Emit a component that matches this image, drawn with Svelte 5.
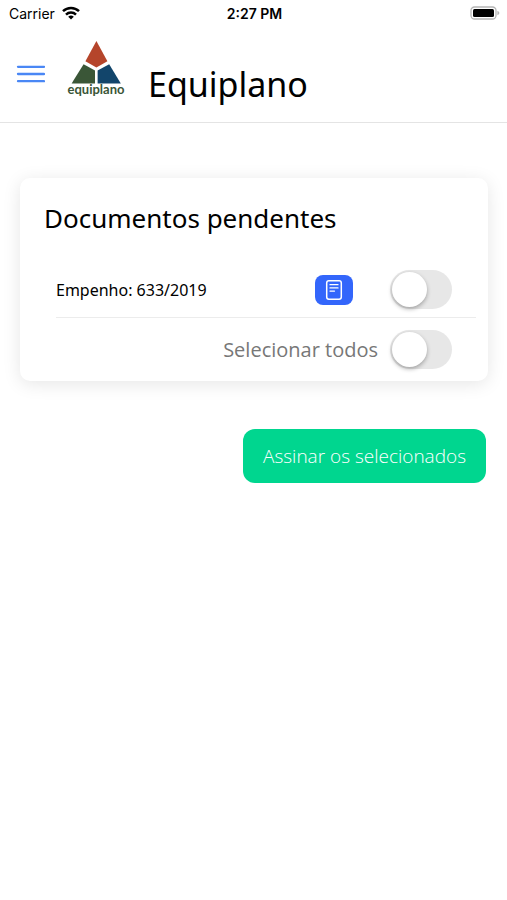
<script lang="ts">
	let documents = $state([{ id: 1, label: 'Empenho: 633/2019', selected: false }]);

	let allSelected = $derived(documents.every((doc) => doc.selected));

	function toggleAll() {
		const next = !allSelected;
		for (const doc of documents) doc.selected = next;
	}
</script>

<div class="status-bar">
	<div class="carrier">
		<span>Carrier</span>
		<svg width="18" height="14" viewBox="0 0 18 14" aria-hidden="true">
			<g fill="none" stroke="#000" stroke-width="2.5">
				<path d="M1 5.2a11.6 11.6 0 0 1 16 0" />
				<path d="M4 8.6a7.2 7.2 0 0 1 10 0" />
			</g>
			<path d="M9 13.6 6.2 10.8a4 4 0 0 1 5.6 0z" />
		</svg>
	</div>
	<span class="time">2:27 PM</span>
	<div class="battery">
		<svg width="30" height="14" viewBox="0 0 30 14" aria-hidden="true">
			<rect x="1" y="1" width="25" height="12" rx="3.5" fill="#fff" stroke="#b5b5b5" stroke-width="1.3" />
			<rect x="3" y="3" width="21" height="8" rx="1.5" />
			<path d="M27.4 4.7q2 .7 2 2.3t-2 2.3z" fill="#b5b5b5" />
		</svg>
	</div>
</div>

<header>
	<button class="menu" aria-label="Menu">
		<svg width="29" height="18" viewBox="0 0 29 18" aria-hidden="true">
			<path d="M2 1.8h26M2 9h26M2 16.2h26" stroke="#4a87f5" stroke-width="2.3" stroke-linecap="round" />
		</svg>
	</button>
	<svg class="logo" width="60" height="60" viewBox="0 0 60 60" role="img" aria-label="equiplano">
		<path d="M30.4 1 41.4 21.2 30.4 27.6 19.4 21.2z" fill="#b5452b" />
		<path d="M17.6 24.2 29 30.6V43.6H5.6z" fill="#3a5637" />
		<path d="M43.2 24.2 31.6 30.6V43.6H54.8z" fill="#12456b" />
		<text x="30" y="54" text-anchor="middle">equiplano</text>
	</svg>
	<h1>Equiplano</h1>
</header>

<main>
	<section class="card">
		<h2>Documentos pendentes</h2>
		<ul>
			{#each documents as doc (doc.id)}
				<li class="row">
					<label class="doc-label" for="doc-{doc.id}">{doc.label}</label>
					<button class="view" aria-label="Ver documento">
						<svg width="18" height="22" viewBox="0 0 18 22" fill="none" stroke="#fff" aria-hidden="true">
							<rect x="1.7" y="1.7" width="14.6" height="18.6" rx="2.2" stroke-width="1.5" />
							<path d="M5 5.7h8M5 8.9h8M5 12.1h4.5" stroke-width="1.3" stroke-linecap="round" />
						</svg>
					</button>
					<input class="toggle" type="checkbox" id="doc-{doc.id}" bind:checked={doc.selected} />
				</li>
			{/each}
		</ul>
		<div class="row all">
			<label for="select-all">Selecionar todos</label>
			<input class="toggle" type="checkbox" id="select-all" checked={allSelected} onchange={toggleAll} />
		</div>
	</section>

	<button class="sign">Assinar os selecionados</button>
</main>

<style>
	:global(body) {
		margin: 0;
		background: #fff;
		color: #000;
		font-family: 'Noto Sans', 'Open Sans', sans-serif;
	}

	button {
		border: 0;
		padding: 0;
		background: none;
		font: inherit;
		cursor: pointer;
	}

	.status-bar {
		display: grid;
		grid-template-columns: 1fr auto 1fr;
		align-items: center;
		height: 26px;
		padding: 0 7px 0 9px;
		font-family: Inter, 'Liberation Sans', sans-serif;
		font-size: 14px;
	}

	.carrier {
		display: flex;
		align-items: center;
		gap: 7px;
	}

	.time {
		font-weight: 600;
	}

	.battery {
		display: flex;
		justify-content: flex-end;
	}

	header {
		display: flex;
		align-items: center;
		height: 96px;
		padding: 0 16px;
		border-bottom: 1px solid #e4e4e4;
	}

	.menu {
		display: flex;
	}

	.logo {
		margin: 0 22px 8px 21px;
	}

	.logo text {
		fill: #3a5637;
		font-family: Lato, 'Liberation Sans', sans-serif;
		font-size: 13px;
		font-weight: 700;
	}

	h1 {
		margin: 20px 0 0;
		font-size: 34px;
		font-weight: 400;
		line-height: 46px;
	}

	main {
		display: flex;
		flex-direction: column;
		padding: 55px 19px 0 20px;
	}

	.card {
		padding: 20px 12px 1px 24px;
		border-radius: 10px;
		background: #fff;
		box-shadow: 0 3px 18px rgba(0, 0, 0, 0.1);
	}

	h2 {
		margin: 0;
		font-size: 26px;
		font-weight: 400;
		line-height: 40px;
	}

	ul {
		margin: 24px 0 0 12px;
		padding: 0;
		list-style: none;
	}

	.row {
		display: flex;
		align-items: center;
		height: 55px;
		padding-right: 24px;
	}

	ul .row {
		border-bottom: 1px solid #ececec;
	}

	.doc-label {
		flex: 1;
		font-size: 16px;
	}

	.view {
		display: grid;
		place-items: center;
		width: 38px;
		height: 30px;
		margin-right: 37px;
		border-radius: 8px;
		background: #3366fb;
	}

	.all {
		justify-content: flex-end;
		gap: 12px;
		height: 62px;
		color: #777;
		font-family: 'Open Sans', 'Noto Sans', sans-serif;
		font-size: 20px;
	}

	.toggle {
		appearance: none;
		flex: none;
		width: 62px;
		height: 39px;
		margin: 0;
		border-radius: 20px;
		background: #e7e7e7;
		cursor: pointer;
	}

	.toggle::before {
		content: '';
		display: block;
		width: 35px;
		height: 35px;
		margin: 2px;
		border-radius: 50%;
		background: #fff;
		box-shadow: 0 2px 4px rgba(0, 0, 0, 0.3);
		transition: margin 0.2s;
	}

	.toggle:checked {
		background: #00d68f;
	}

	.toggle:checked::before {
		margin-left: 25px;
	}

	.sign {
		align-self: flex-end;
		height: 54px;
		margin: 48px 2px 0 0;
		padding: 0 20px;
		border-radius: 12px;
		background: #00d68f;
		color: #fff;
		font-family: 'Open Sans', 'Noto Sans', sans-serif;
		font-size: 19px;
		font-weight: 300;
	}
</style>
